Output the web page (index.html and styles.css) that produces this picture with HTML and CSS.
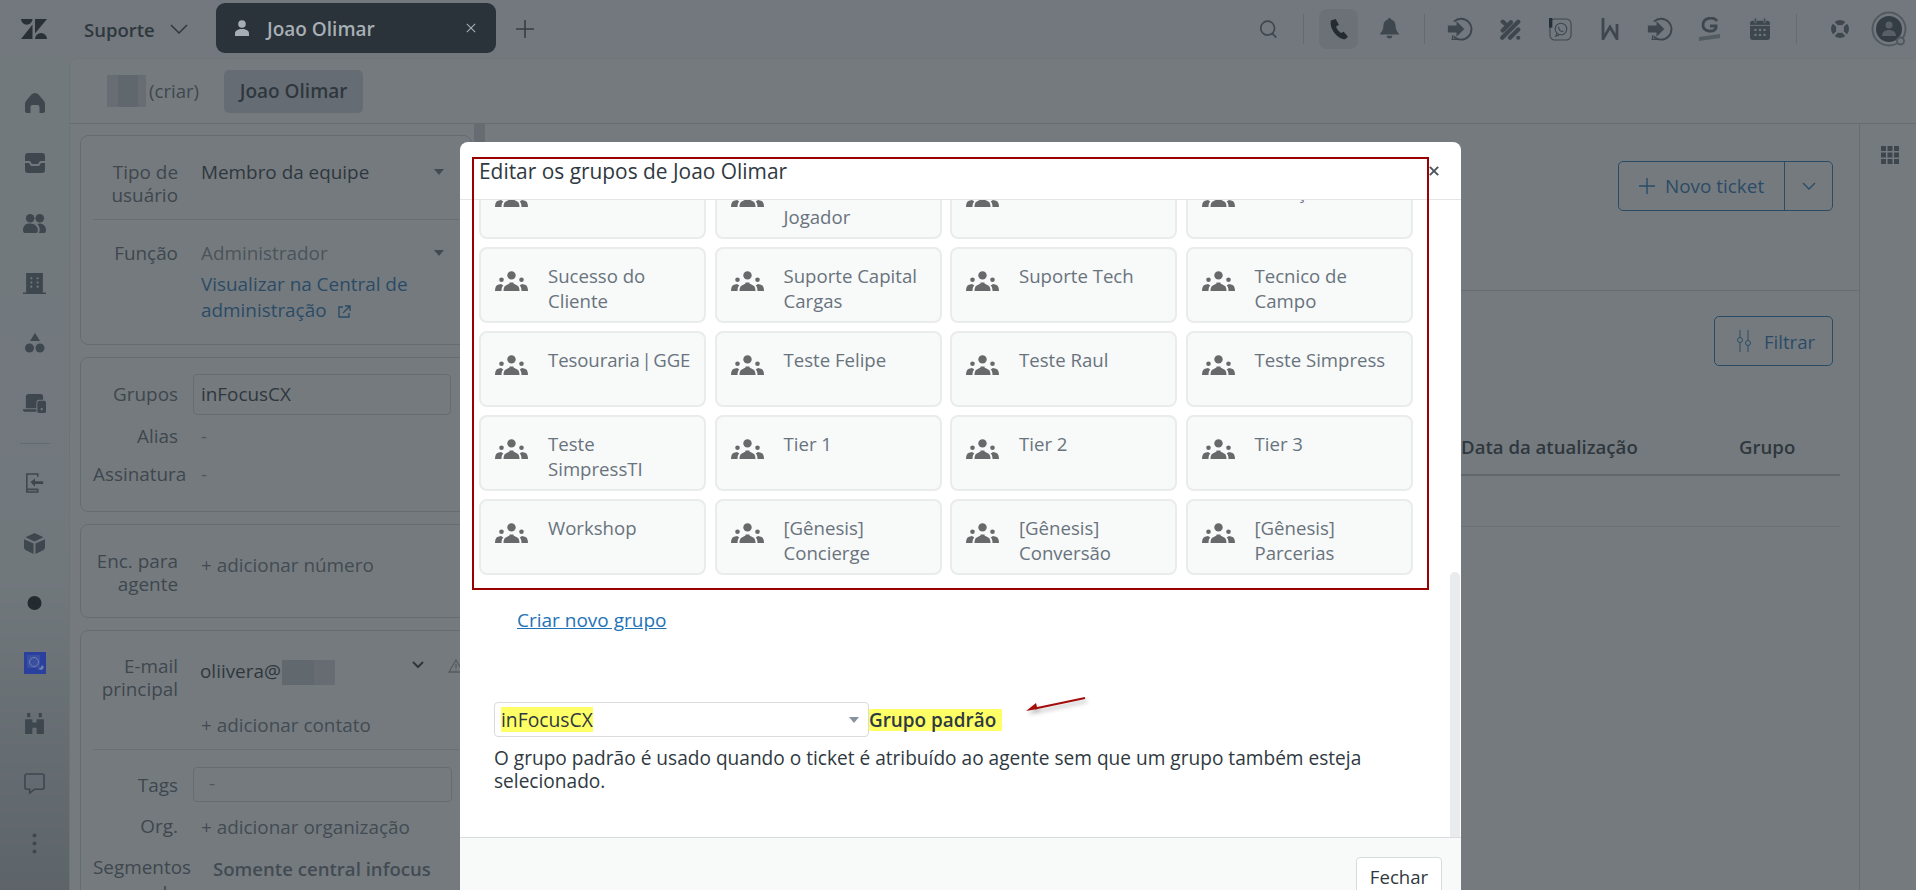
FILE: index.html
```html
<!DOCTYPE html>
<html lang="pt-BR">
<head>
<meta charset="utf-8">
<title>Editar os grupos de Joao Olimar</title>
<link rel="stylesheet" href="styles.css">
</head>
<body>
<svg class="defs" width="0" height="0" aria-hidden="true">
  <symbol id="group" viewBox="0 0 33 20">
    <circle cx="16.5" cy="4.4" r="4.2"/>
    <path d="M8.500 20c0-2.600.5-4.800 2.300-5.600l3.700-1.800v-1h4v1l3.700 1.800c1.800.8 2.300 3 2.300 5.600z"/>
    <circle cx="6.500" cy="8.800" r="2.300"/>
    <circle cx="26.500" cy="8.800" r="2.300"/>
    <path d="M0 20c0-3 .8-5.600 3-6.300l3-.7 2.300 1.500c-1.300 1.100-1.800 3-1.800 5.500zM33 20c0-3-.8-5.600-3-6.300l-3-.7-2.300 1.500c1.300 1.100 1.800 3 1.800 5.500z"/>
  </symbol>
  <symbol id="login" viewBox="0 0 30 30">
    <path d="M8 6.500A12 12 0 1 1 8 24" fill="none" stroke="currentColor" stroke-width="2.200"/>
    <path d="M1 11h10V6l9 9-9 9v-5H1z"/>
    <path d="M7 22l-1 5h6" fill="none" stroke="currentColor" stroke-width="1.500"/>
  </symbol>
</svg>

<div class="shell">
  <header class="topbar">
    <svg class="logo" viewBox="0 0 26 20"><path d="M0 0h11.500a5.750 5.750 0 0 1-11.500 0zM11.500 5.500V20H0zM14 14.500V0h12zM14 20a6 6 0 0 1 12 0z"/></svg>
    <span class="brand">Suporte</span>
    <svg class="brand-chev" viewBox="0 0 18 10"><path d="M1 1l8 8 8-8"/></svg>
    <div class="ticket-tab">
      <svg class="tab-user" viewBox="0 0 14 16"><circle cx="7" cy="4" r="3.800"/><path d="M0 16v-2.500C0 10.500 3 9 7 9s7 1.500 7 4.500V16z"/></svg>
      <span class="tab-name">Joao Olimar</span>
      <svg class="tab-x" viewBox="0 0 12 12"><path d="M1 1l10 10M11 1L1 11"/></svg>
    </div>
    <svg class="tab-plus" viewBox="0 0 20 20"><path d="M10 1v18M1 10h18"/></svg>
    <div class="tools">
      <span class="tool tool-search"><svg viewBox="0 0 22 22" class="ic-search"><circle cx="10" cy="10" r="8"/><path d="M15.500 16l4.500 5"/></svg></span>
      <i class="vr vr-a"></i>
      <span class="tool tool-phone"><svg viewBox="0 0 20 28" preserveAspectRatio="none" class="ic-phone"><path d="M2 2l5-2 3.500 7.500-3 2.500c.5 3 2.500 6.500 5 8.500l3-1.500 4.500 6.500-3 3.500C9 27 0 13 2 2z"/></svg></span>
      <span class="tool tool-bell"><svg viewBox="0 0 20 26" preserveAspectRatio="none" class="ic-fill"><path d="M10 0c1 0 1.800.8 1.800 1.800C15 3 16.500 6 16.500 10c0 4 1.500 6 3.500 8.500v1H0v-1C2 16 3.500 14 3.500 10c0-4 1.500-7 4.700-8.200C8.200.8 9 0 10 0z"/><path d="M7 21h6a3 3 0 0 1-6 0z"/></svg></span>
      <i class="vr vr-b"></i>
      <span class="apps">
        <span class="tool app-ic"><svg class="ic-app" viewBox="0 0 30 30"><use href="#login"/></svg></span>
        <span class="tool app-ic"><svg class="ic-dots" viewBox="0 0 24 24"><path d="M4 3.500l2.500 2M13 4L4 13M21 3.500L3.500 21M21 12l-9 9M21 21h0"/></svg></span>
        <span class="tool app-ic"><svg class="ic-wa" viewBox="0 0 24 24"><rect x="1" y="1" width="22" height="22" rx="5"/><circle cx="12.500" cy="11.500" r="6"/><path d="M8.500 16l-1.500 3 3.500-1"/><path d="M10 9c0 3 2 5 5 5" /><rect class="wa-badge" x="0" y="0" width="3.500" height="10"/></svg></span>
        <span class="tool app-ic"><svg class="ic-w" viewBox="0 0 18 22"><path d="M2 0V21L9 9l7 12V6"/></svg></span>
        <span class="tool app-ic"><svg class="ic-app" viewBox="0 0 30 30"><use href="#login"/></svg></span>
        <span class="tool app-ic"><svg class="ic-g" viewBox="0 0 22 24"><path class="g-line" d="M18 4C15-.5 4 0 4 8c0 7 11 8 13 3V9h-6"/><path class="g-bar" d="M0 20l21-3v4L0 24z"/></svg></span>
        <span class="tool app-ic"><svg class="ic-cal" viewBox="0 0 22 24"><path d="M3 3h16a3 3 0 0 1 3 3v15a3 3 0 0 1-3 3H3a3 3 0 0 1-3-3V6a3 3 0 0 1 3-3z"/><path class="cal-pin" d="M5 0h2v5H5zM15 0h2v5h-2z"/><path class="cal-line" d="M0 8h22"/><circle class="cal-dot" cx="6" cy="13" r="1.300"/><circle class="cal-dot" cx="11" cy="13" r="1.300"/><circle class="cal-dot" cx="16" cy="13" r="1.300"/><circle class="cal-dot" cx="6" cy="18.500" r="1.300"/><circle class="cal-dot" cx="11" cy="18.500" r="1.300"/><circle class="cal-dot" cx="16" cy="18.500" r="1.300"/></svg></span>
      </span>
      <i class="vr vr-c"></i>
      <span class="tool tool-help"><svg class="ic-buoy" viewBox="0 0 20 20"><circle cx="10" cy="10" r="9"/><circle class="buoy-hole" cx="10" cy="10" r="4"/><path class="buoy-cut" d="M2 2l6 6M18 2l-6 6M2 18l6-6M18 18l-6-6"/></svg></span>
      <span class="tool tool-avatar"><svg class="ic-avatar" viewBox="0 0 36 36"><circle class="av-ring" cx="18" cy="18" r="16.500"/><circle class="av-core" cx="18" cy="18" r="13"/><circle class="av-head" cx="18" cy="14" r="3.500"/><path class="av-head" d="M11 25c0-4 3-6 7-6s7 2 7 6z"/><circle class="av-dot" cx="29.500" cy="30" r="3.500"/></svg></span>
    </div>
  </header>

  <div class="workspace">
    <nav class="sidebar">
      <span class="nav"><svg viewBox="0 0 20 20"><path d="M10 0c2 0 3 1 4 2l5 6c.700 1 1 2 1 3v7a2 2 0 0 1-2 2h-3.500v-6a2 2 0 0 0-2-2h-5a2 2 0 0 0-2 2v6H2a2 2 0 0 1-2-2v-7c0-1 .300-2 1-3l5-6c1-1 2-2 4-2z"/></svg></span>
      <span class="nav"><svg viewBox="0 0 20 20"><path d="M3 0h14a3 3 0 0 1 3 3v5h-5l-2 3H7L5 8H0V3a3 3 0 0 1 3-3zM0 10h4l2 3h8l2-3h4v7a3 3 0 0 1-3 3H3a3 3 0 0 1-3-3z"/></svg></span>
      <span class="nav"><svg class="wide" viewBox="0 0 24 20"><circle cx="7.500" cy="4.500" r="4.500"/><circle cx="17.500" cy="4.500" r="4.500"/><path d="M0 17c0-5 3-7 7.500-7s8 3 8 7c0 2-1 3-2.500 3H2.500C1 20 0 19 0 17zM17 10c4 0 7 2.500 7 7 0 2-1 3-2.500 3H16c1-1 1.500-2 1.500-3.500 0-2-1-4.500-2.500-6z"/></svg></span>
      <span class="nav"><svg class="wide" viewBox="0 0 22 20"><path d="M3 0h16v18.500h3V20H0v-1.500h3z"/><g class="holes"><circle cx="8" cy="5" r="1"/><circle cx="14" cy="5" r="1"/><circle cx="8" cy="9" r="1"/><circle cx="14" cy="9" r="1"/><circle cx="8" cy="13" r="1"/><circle cx="14" cy="13" r="1"/></g></svg></span>
      <span class="nav"><svg viewBox="0 0 20 20"><path d="M10 0l5 8H5z"/><circle cx="4.500" cy="15" r="4.500"/><circle cx="15" cy="15" r="4.500"/></svg></span>
      <span class="nav"><svg class="wide" viewBox="0 0 24 20"><path d="M6 0h12a3 3 0 0 1 3 3v3h-4a3 3 0 0 0-3 3v6H3V3a3 3 0 0 1 3-3zM0 16h14v2.500H2a2 2 0 0 1-2-2.500z"/><path d="M17 7h5a2 2 0 0 1 2 2v9a2 2 0 0 1-2 2h-5a2 2 0 0 1-2-2V9a2 2 0 0 1 2-2z"/><circle class="hole" cx="19.500" cy="16" r="1.200"/></svg></span>
      <i class="nav-rule"></i>
      <span class="nav"><svg viewBox="0 0 22 22"><path class="stroke" d="M14 4V1H2v20h12v-4M2 18h12"/><path d="M6 10l5-4v3h9v3h-9v3z"/></svg></span>
      <span class="nav"><svg class="wide" viewBox="0 0 22 22"><path d="M11 0l9.500 4.500L11 9 1.500 4.500zM0 6.500L10 11v11L2 18c-1-.500-2-1.500-2-3zM22 6.500V15c0 1.500-1 2.500-2 3l-8 4V11z"/></svg></span>
      <span class="nav"><svg class="dot" viewBox="0 0 14 14"><circle cx="7" cy="7" r="7"/></svg></span>
      <span class="nav"><span class="blueapp"><svg viewBox="0 0 22 22"><rect class="ba-sq" x="3" y="3" width="13" height="13"/><circle class="ba-c" cx="10" cy="10" r="4.500"/><path class="ba-h" d="M13 17c3 0 4-2 5-4l2 2-2 3z"/></svg></span></span>
      <span class="nav"><svg class="wide" viewBox="0 0 20 20"><path d="M1 6h7v3h4V6h7v14h-7v-6H8v6H1zM3 0h3v4H3zM14 0h3v4h-3z"/></svg></span>
      <span class="nav"><svg class="wide" viewBox="0 0 22 22"><path class="stroke" d="M3 1h16a2 2 0 0 1 2 2v12a2 2 0 0 1-2 2h-8l-5 4v-4H3a2 2 0 0 1-2-2V3a2 2 0 0 1 2-2z"/></svg></span>
      <span class="nav"><svg class="dots" viewBox="0 0 5 21"><circle cx="2.500" cy="2.500" r="2"/><circle cx="2.500" cy="10.500" r="2"/><circle cx="2.500" cy="18.500" r="2"/></svg></span>
    </nav>

    <main class="main">
      <div class="tabs">
        <span class="blur blur-name"></span>
        <span class="tab-text">(criar)</span>
        <span class="tab-active">Joao Olimar</span>
      </div>
      <div class="columns">
        <aside class="pane">
          <div class="cards">
            <section class="card card-a">
              <div class="row row-type">
                <span class="label">Tipo de usuário</span>
                <span class="value strong">Membro da equipe<i class="caret"></i></span>
              </div>
              <div class="row row-role">
                <span class="label">Função</span>
                <div class="value">
                  <span class="muted">Administrador<i class="caret"></i></span>
                  <a class="admin-link">Visualizar na Central de administração <svg viewBox="0 0 14 14"><path d="M6 2H2v10h10V8M8 1h5v5M13 1L6 8"/></svg></a>
                </div>
              </div>
            </section>
            <section class="card card-b">
              <div class="row row-input">
                <span class="label">Grupos</span>
                <span class="input input-groups">inFocusCX</span>
              </div>
              <div class="row row-alias"><span class="label">Alias</span><span class="value dash">-</span></div>
              <div class="row row-sign"><span class="label label-wide">Assinatura</span><span class="value dash">-</span></div>
            </section>
            <section class="card card-c">
              <div class="row">
                <span class="label">Enc. para agente</span>
                <span class="value add add-phone">+ adicionar número</span>
              </div>
            </section>
            <section class="card card-d">
              <div class="row row-mail">
                <span class="label">E-mail principal</span>
                <div class="value mail-line"><span class="strong">oliivera@</span><span class="blur blur-mail"></span>
                  <svg class="mail-chev" viewBox="0 0 12 8"><path d="M1 1l5 5 5-5"/></svg>
                  <svg class="mail-warn" viewBox="0 0 16 14"><path d="M8 1l7 12H1zM8 5v4M8 10.500v1"/></svg>
                </div>
              </div>
              <div class="row row-contact"><span class="label"></span><span class="value add">+ adicionar contato</span></div>
              <div class="row row-tags"><span class="label">Tags</span><span class="input input-tags">-</span></div>
              <div class="row row-org"><span class="label">Org.</span><span class="value add">+ adicionar organização</span></div>
              <div class="row row-seg"><span class="label">Segmentos de</span><span class="value seg">Somente central infocus</span></div>
            </section>
          </div>
          <i class="pane-thumb"></i>
        </aside>

        <section class="center">
          <div class="center-head">
            <div class="split">
              <span class="split-main"><svg viewBox="0 0 16 16"><path d="M8 0v16M0 8h16"/></svg>Novo ticket</span>
              <span class="split-more"><svg viewBox="0 0 14 8"><path d="M1 1l6 6 6-6"/></svg></span>
            </div>
          </div>
          <div class="filter-bar">
            <span class="filter"><svg viewBox="0 0 14 22"><path d="M3 0v7M3 13v9M11 0v10M11 16v6"/><circle cx="3" cy="10" r="2.500"/><circle cx="11" cy="13" r="2.500"/></svg>Filtrar</span>
          </div>
          <div class="thead">
            <span></span><span>Data da atualização</span><span>Grupo</span>
          </div>
          <div class="trow"></div>
        </section>

        <aside class="rail">
          <svg viewBox="0 0 18 18"><path d="M0 0h5v5H0zM6.500 0h5v5h-5zM13 0h5v5h-5zM0 6.500h5v5H0zM6.500 6.500h5v5h-5zM13 6.500h5v5h-5zM0 13h5v5H0zM6.500 13h5v5h-5zM13 13h5v5h-5z"/></svg>
        </aside>
      </div>
    </main>
  </div>
</div>

<div class="backdrop"></div>

<div class="modal">
  <header class="modal-head">
    <h2>Editar os grupos de Joao Olimar</h2>
    <svg class="modal-x" viewBox="0 0 12 12"><path d="M1 1l10 10M11 1L1 11"/></svg>
  </header>
  <div class="modal-body">
    <div class="tiles">
      <div class="tile"><svg><use href="#group"/></svg><span>Recursos</span></div>
      <div class="tile"><svg><use href="#group"/></svg><span>Sócio<br>Jogador</span></div>
      <div class="tile"><svg><use href="#group"/></svg><span>Sucesso</span></div>
      <div class="tile"><svg><use href="#group"/></svg><span>Serviços</span></div>
      <div class="tile"><svg><use href="#group"/></svg><span>Sucesso do<br>Cliente</span></div>
      <div class="tile"><svg><use href="#group"/></svg><span>Suporte Capital<br>Cargas</span></div>
      <div class="tile"><svg><use href="#group"/></svg><span>Suporte Tech</span></div>
      <div class="tile"><svg><use href="#group"/></svg><span>Tecnico de<br>Campo</span></div>
      <div class="tile"><svg><use href="#group"/></svg><span class="tight">Tesouraria | GGE</span></div>
      <div class="tile"><svg><use href="#group"/></svg><span>Teste Felipe</span></div>
      <div class="tile"><svg><use href="#group"/></svg><span>Teste Raul</span></div>
      <div class="tile"><svg><use href="#group"/></svg><span>Teste Simpress</span></div>
      <div class="tile"><svg><use href="#group"/></svg><span>Teste<br>SimpressTI</span></div>
      <div class="tile"><svg><use href="#group"/></svg><span>Tier 1</span></div>
      <div class="tile"><svg><use href="#group"/></svg><span>Tier 2</span></div>
      <div class="tile"><svg><use href="#group"/></svg><span>Tier 3</span></div>
      <div class="tile"><svg><use href="#group"/></svg><span>Workshop</span></div>
      <div class="tile"><svg><use href="#group"/></svg><span>[Gênesis]<br>Concierge</span></div>
      <div class="tile"><svg><use href="#group"/></svg><span>[Gênesis]<br>Conversão</span></div>
      <div class="tile"><svg><use href="#group"/></svg><span>[Gênesis]<br>Parcerias</span></div>
    </div>
    <a class="new-group">Criar novo grupo</a>
    <div class="default-row">
      <div class="select"><mark>inFocusCX</mark><i class="caret caret-select"></i></div>
      <b class="default-label">Grupo padrão</b>
    </div>
    <p class="hint">O grupo padrão é usado quando o ticket é atribuído ao agente sem que um grupo também esteja selecionado.</p>
    <i class="scrollbar"></i>
  </div>
  <footer class="modal-foot"><span class="close-btn">Fechar</span></footer>
</div>

<div class="mark-box"></div>
<svg class="mark-arrow" viewBox="0 0 60 16">
  <path d="M59 1L9 11.500" />
  <path class="tip" d="M0 14l10-8 1.500 6z"/>
</svg>
</body>
</html>
```

FILE: styles.css
```css
* { box-sizing: border-box; }
html, body { margin: 0; height: 100%; overflow: hidden; }
body { font-family: "Open Sans", "Noto Sans", sans-serif; font-size: 18.6px; line-height: 23px; color: #2f3941; background: #fff; }
svg { display: block; }
.defs { position: absolute; }
i { display: block; font-style: normal; }

.shell { height: 890px; display: flex; flex-direction: column; overflow: hidden; background: #f3f7f8; }

/* top bar */
.topbar { height: 58px; flex: none; display: flex; align-items: center; background: #f3f7f8; }
.logo { width: 26px; height: 20px; margin-left: 21px; fill: #1f272e; }
.brand { margin-left: 37px; width: 72px; font-weight: 600; font-size: 18.500px; color: #2f3941; white-space: nowrap; }
.brand-chev { width: 18px; height: 10px; margin-left: 14px; fill: none; stroke: #2f3941; stroke-width: 1.5; }
.ticket-tab { position: relative; z-index: 11; width: 280px; height: 50px; margin-left: 28px; margin-top: -2px; display: flex; align-items: center; background: #2a323a; border-radius: 9px; color: #a7afb4; }
.tab-user { width: 14px; height: 16px; margin-left: 19px; fill: #a7afb4; }
.tab-name { margin-left: 18px; margin-top: 2px; font-weight: 600; font-size: 19px; white-space: nowrap; }
.tab-x { width: 10px; height: 10px; margin-left: auto; margin-right: 20px; fill: none; stroke: #a7afb4; stroke-width: 1.3; }
.tab-plus { width: 20px; height: 20px; margin-left: 19px; fill: none; stroke: #434b51; stroke-width: 1.6; }

.tools { margin-left: auto; display: flex; align-items: center; color: #5d6870; }
.tool { display: flex; align-items: center; justify-content: center; flex: none; }
.tool-search { width: 40px; margin-right: 15px; }
.ic-search { width: 19px; height: 20px; fill: none; stroke: #5d6870; stroke-width: 2; }
.vr { width: 1px; height: 30px; background: #c8ced2; flex: none; }
.tool-phone { width: 39px; height: 40px; margin-left: 15px; border-radius: 8px; background: #dfe2e8; }
.ic-phone { width: 19px; height: 21px; fill: #0f161c; }
.tool-bell { width: 40px; margin-left: 11px; }
.ic-fill { width: 19px; height: 22px; fill: #5d6870; }
.vr-b { margin-left: 15px; }
.apps { display: flex; margin-left: 10px; }
.app-ic { width: 50px; height: 34px; }
.ic-app { width: 26px; height: 26px; fill: currentColor; }
.ic-dots { width: 22px; height: 23px; fill: none; stroke: #5d6870; stroke-width: 4.600; stroke-linecap: round; }
.ic-wa { width: 23px; height: 23px; fill: none; stroke: #5d6870; stroke-width: 1.2; overflow: visible; }
.wa-badge { fill: #10202c; stroke: none; }
.ic-w { width: 18px; height: 22px; fill: none; stroke: #5d6870; stroke-width: 2.800; }
.ic-g { width: 22px; height: 24px; fill: none; }
.g-line { stroke: #5d6870; stroke-width: 2.800; }
.g-bar { fill: #9aa3a8; }
.ic-cal { width: 20px; height: 22px; fill: #5d6870; }
.cal-pin { fill: #5d6870; stroke: #f3f7f8; stroke-width: .6; }
.cal-line { stroke: #f3f7f8; stroke-width: 1; }
.cal-dot { fill: #f3f7f8; }
.vr-c { margin-left: 11px; }
.tool-help { width: 40px; margin-left: 23px; }
.ic-buoy { width: 20px; height: 20px; fill: #5d6870; }
.buoy-hole { fill: #f3f7f8; }
.buoy-cut { stroke: #f3f7f8; stroke-width: 2.4; fill: none; }
.tool-avatar { width: 54px; margin-left: 2px; }
.ic-avatar { width: 36px; height: 36px; }
.av-ring { fill: none; stroke: #939ca1; stroke-width: 2; }
.av-core { fill: #3f4b54; }
.av-head { fill: #a7afb4; }
.av-dot { fill: #f3f7f8; stroke: #939ca1; stroke-width: 2; }

/* sidebar */
.workspace { flex: 1; display: flex; min-height: 0; }
.sidebar { width: 69px; flex: none; padding-top: 15px; display: flex; flex-direction: column; background: linear-gradient(#f4f9fa 0%, #f1f6f7 62%, #b7bcbf 100%); }
.nav { height: 60px; flex: none; display: flex; align-items: center; justify-content: center; }
.nav svg { width: 20px; height: 20px; fill: #5c6770; }
.nav svg.wide { width: 23px; height: 21px; }
.nav .holes circle, .nav .hole { fill: #f4f9fa; }
.nav .stroke { fill: none; stroke: #5c6770; stroke-width: 1.7; }
.nav svg.dot { width: 15px; height: 14px; fill: #0d1419; }
.nav svg.dots { width: 5px; height: 21px; }
.nav-rule { width: 30px; height: 1px; margin: 10px auto 9px; background: #c8ced2; flex: none; }
.blueapp { position: relative; z-index: 11; width: 22px; height: 22px; background: #2a409f; display: block; }
.blueapp svg { width: 22px; height: 22px; }
.ba-sq { fill: #3a4f9f; }
.ba-c { fill: none; stroke: #6f7fb0; stroke-width: 1; }
.ba-h { fill: #6f7fa8; }

/* main */
.main { flex: 1; display: flex; flex-direction: column; min-width: 0; background: #fcfdfd; border-top-left-radius: 9px; border-left: 1px solid #e5e9ea; border-top: 1px solid #eceff0; }
.tabs { height: 65px; flex: none; display: flex; align-items: center; padding-left: 37px; border-bottom: 1px solid #cfd4d7; }
.blur { display: inline-block; flex: none; background: linear-gradient(90deg, #d2d6da 0 28%, #c0c6c9 28% 80%, #d2d6da 80%); }
.blur-name { width: 39px; height: 32px; }
.tab-text { margin-left: 3px; margin-top: -2px; color: #5c6770; }
.tab-active { margin-left: 25px; width: 139px; height: 43px; display: flex; align-items: center; justify-content: center; background: #cfd3dc; border-radius: 5px; font-weight: 600; font-size: 19px; }

.columns { flex: 1; display: flex; min-height: 0; }
.pane { width: 415px; flex: none; display: flex; padding: 11px 0 0 10px; border-right: 1px solid #cfd4d7; overflow: hidden; }
.cards { width: 392px; flex: none; display: flex; flex-direction: column; gap: 12px; }
.pane-thumb { width: 10px; height: 40px; margin: -11px 0 0 2px; background: #cfd4d7; flex: none; }
.card { border: 1px solid #cdd2d5; border-radius: 8px; flex: none; padding: 0 12px; font-size: 18.900px; }
.row { display: grid; grid-template-columns: 85px 1fr; column-gap: 23px; }
.label { color: #5c6770; text-align: right; }
.value { position: relative; min-width: 0; }
.strong { color: #2f3941; }
.caret { position: absolute; right: 15px; top: 8px; width: 0; height: 0; border: 5px solid transparent; border-top: 6px solid #68737d; border-bottom: 0; }
.muted { display: block; position: relative; color: #828c94; }
.card-a { height: 210px; padding-top: 25px; }
.row-type { padding-bottom: 12px; border-bottom: 1px solid #d8dcde; }
.row-role { padding-top: 22px; }
.admin-link { display: block; margin-top: 6px; line-height: 26px; color: #1f73b7; }
.admin-link svg { display: inline-block; width: 14px; height: 14px; margin-left: 6px; vertical-align: -2px; fill: none; stroke: #1f73b7; stroke-width: 1.4; }
.card-b { height: 155px; padding-top: 16px; }
.row-input { align-items: center; }
.row-input .label { margin-top: -1px; }
.input { display: block; height: 41px; margin-left: -8px; padding: 0 7px; line-height: 39px; border: 1px solid #cdd2d5; border-radius: 4px; }
.input-groups { width: 258px; }
.row-alias { margin-top: 10px; }
.row-sign { margin-top: 15px; }
.dash { color: #87929d; }
.card-c { height: 94px; padding-top: 25px; }
.add { color: #68737d; }
.add-phone { padding-top: 4px; }
.card-d { height: 300px; padding-top: 24px; }
.mail-line { display: flex; align-items: flex-start; padding-top: 5px; margin-left: -1px; }
.blur-mail { width: 53px; height: 25px; margin-left: 1px; margin-top: 0; background: linear-gradient(90deg, #c4c9cc 0 60%, #d0d4d8 60%); }
.mail-chev { position: absolute; left: 212px; top: 6px; width: 12px; height: 8px; fill: none; stroke: #2f3941; stroke-width: 2; }
.mail-warn { position: absolute; left: 248px; top: 4px; width: 16px; height: 14px; fill: none; stroke: #9aa2a8; stroke-width: 1.3; }
.row-contact { margin-top: 13px; }
.row-tags { margin-top: 12px; padding-top: 17px; border-top: 1px solid #d8dcde; align-items: center; }
.row-tags .label { margin-top: 2px; }
.input-tags { width: 259px; height: 35px; line-height: 31px; padding-left: 15px; color: #87929d; }
.row-org { margin-top: 13px; }
.row-org .add { padding-top: 1px; }
.row-seg { margin-top: 15px; line-height: 26px; }
.seg { margin-left: 12px; padding-top: 2px; font-weight: 600; color: #68737d; white-space: nowrap; font-size: 18.600px; }

/* centre */
.center { flex: 1; min-width: 0; display: flex; flex-direction: column; }
.center-head { height: 167px; flex: none; display: flex; justify-content: flex-end; padding: 37px 26px 0 0; border-bottom: 1px solid #cfd4d7; }
.split { width: 215px; height: 50px; display: flex; border: 1px solid #1f73b7; border-radius: 5px; color: #1f73b7; }
.split-main { width: 166px; display: flex; align-items: center; padding-left: 20px; gap: 10px; border-right: 1px solid #1f73b7; white-space: nowrap; font-size: 18.900px; }
.split-main svg { width: 16px; height: 16px; fill: none; stroke: #1f73b7; stroke-width: 1.4; flex: none; }
.split-more { flex: 1; display: flex; align-items: center; justify-content: center; }
.split-more svg { width: 14px; height: 8px; fill: none; stroke: #1f73b7; stroke-width: 1.4; }
.filter-bar { display: flex; justify-content: flex-end; padding: 25px 26px 0 0; flex: none; }
.filter { width: 119px; height: 50px; display: flex; align-items: center; gap: 13px; padding-left: 22px; border: 1px solid #1f73b7; border-radius: 5px; color: #1f73b7; }
.filter svg { width: 14px; height: 22px; fill: none; stroke: #1f73b7; stroke-width: 1; flex: none; }
.thead { display: grid; grid-template-columns: 1fr 278px 101px; margin: 56px 19px 0 0; padding-top: 13px; height: 54px; border-bottom: 2px solid #c0c6ca; font-weight: 600; }
.trow { height: 51px; margin-right: 19px; border-bottom: 1px solid #dfe2e4; }
.rail { width: 57px; flex: none; padding: 22px 0 0 21px; border-left: 1px solid #cfd4d7; }
.rail svg { width: 18px; height: 18px; fill: #5c6770; }

/* overlay */
.backdrop { position: fixed; inset: 0; z-index: 10; background: rgba(47, 55, 60, .66); }
.modal { position: fixed; left: 460px; top: 142px; z-index: 20; width: 1001px; height: 810px; display: flex; flex-direction: column; background: #fff; border-radius: 8px 8px 0 0; }
.modal-head { height: 58px; flex: none; display: flex; align-items: flex-start; border-bottom: 1px solid #e3e6e8; padding: 16px 22px 0 19px; }
.modal-head h2 { margin: 0; font-size: 20.900px; line-height: 26px; font-weight: 500; color: #2f3941; }
.modal-x { width: 10px; height: 10px; margin-left: auto; margin-top: 8px; fill: none; stroke: #4d575f; stroke-width: 2.4; }
.modal-body { position: relative; height: 637px; flex: none; overflow: hidden; }
.tiles { margin: -37px 0 0 19px; display: grid; grid-template-columns: repeat(4, 227px); column-gap: 8.500px; grid-auto-rows: 76px; row-gap: 8px; }
.tile { display: flex; align-items: flex-start; padding: 14px 6px 0 14px; background: #f8f9f9; border: 2px solid #e9ebed; border-radius: 8px; color: #68737d; line-height: 25px; }
.tile svg { width: 33px; height: 20px; margin-top: 8px; margin-right: 20px; flex: none; fill: #68696b; }
.tile span { white-space: nowrap; }
.tile .tight { word-spacing: -3px; letter-spacing: -.1px; }
.new-group { display: block; margin: 33px 0 0 57px; line-height: 25px; width: max-content; color: #1f73b7; text-decoration: underline; font-size: 19px; }
.default-row { display: flex; align-items: center; margin: 69px 0 0 34px; }
.select { position: relative; width: 375px; height: 35px; padding: 4px 6px; border: 1px solid #d8dcde; border-radius: 4px; font-size: 19.300px; }
mark { display: inline-block; height: 25px; line-height: 25px; background: #ffff66; color: #2f3941; }
.caret-select { right: 9px; top: 14px; border-top-color: #87929d; }
.default-label { padding: 0 6px 0 0; height: 22px; line-height: 22px; background: #ffff66; font-weight: 600; font-size: 18.900px; }
.hint { width: 880px; margin: 10px 0 0 34px; line-height: 22.500px; font-size: 19.100px; }
.scrollbar { position: absolute; right: 1px; bottom: 0; width: 10px; height: 265px; background: #e9ebed; border-radius: 5px 5px 0 0; }
.modal-foot { flex: 1; display: flex; justify-content: flex-end; align-items: flex-start; padding: 19px 19px 0 0; background: #f8f9f9; border-top: 1px solid #d8dcde; }
.close-btn { width: 86px; height: 38px; display: flex; align-items: center; justify-content: center; background: #fff; border: 1px solid #d8dcde; border-radius: 4px; }

/* annotations */
.mark-box { position: fixed; left: 472px; top: 157px; width: 957px; height: 433px; z-index: 30; border: 2px solid #9b0000; pointer-events: none; }
.mark-arrow { position: fixed; left: 1026px; top: 697px; width: 60px; height: 16px; z-index: 30; fill: none; stroke: #a50d0d; stroke-width: 2; overflow: visible; filter: drop-shadow(2px 3px 2px rgba(0,0,0,.3)); }
.mark-arrow .tip { fill: #a50d0d; stroke: none; }
```
